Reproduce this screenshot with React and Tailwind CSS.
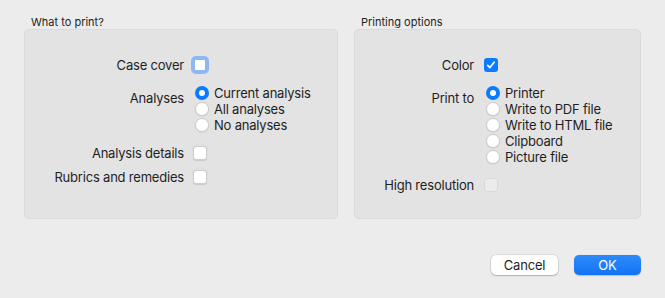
import { useState } from 'react'

const Check = ({ checked, focused, disabled }) => {
  if (checked) {
    return (
      <span className="flex h-[14px] w-[14px] items-center justify-center rounded-[3px] bg-[#0b7bff]">
        <svg viewBox="0 0 14 14" className="h-[12px] w-[12px]">
          <path d="M3.2 7.4l2.5 2.6 5-6.2" fill="none" stroke="#fff" strokeWidth="2" strokeLinecap="round" strokeLinejoin="round" />
        </svg>
      </span>
    )
  }
  if (disabled) {
    return <span className="block h-[14px] w-[14px] rounded-[3px] border border-[#d9d9d9] bg-[#ebebeb]" />
  }
  if (focused) {
    return <span className="block h-[14px] w-[14px] rounded-[3px] border-2 border-[#8fb7f3] bg-white shadow-[0_0_0_2px_#8fb7f3]" />
  }
  return <span className="block h-[14px] w-[14px] rounded-[3px] border border-[#cdcdcd] bg-white shadow-[0_0.5px_1px_rgba(0,0,0,0.12)]" />
}

const Radio = ({ selected, label, onClick }) => (
  <div className="flex h-[16px] cursor-default items-center" onClick={onClick}>
    {selected ? (
      <span className="ml-[2px] flex h-[14px] w-[14px] items-center justify-center rounded-full bg-[#0b7bff]">
        <span className="h-[6px] w-[6px] rounded-full bg-white" />
      </span>
    ) : (
      <span className="ml-[2px] block h-[14px] w-[14px] rounded-full border border-[#cdcdcd] bg-white shadow-[0_0.5px_1px_rgba(0,0,0,0.12)]" />
    )}
    <span className="ml-[5px]">{label}</span>
  </div>
)

const Row = ({ label, labelW, children, className = '' }) => (
  <div className={`flex h-[20px] items-center ${className}`}>
    <div className="text-right" style={{ width: labelW }}>{label}</div>
    <div className="ml-[9px] flex items-center">{children}</div>
  </div>
)

const Group = ({ title, width, children }) => (
  <div style={{ width }}>
    <div className="h-[13px] pl-[7px] text-[11px] leading-[13px] tracking-normal">{title}</div>
    <div className="h-[190px] rounded-[5px] border border-[#dadada] bg-[#e3e3e3] pt-[25px]">{children}</div>
  </div>
)

export default function App() {
  const [analysis, setAnalysis] = useState('current')
  const [target, setTarget] = useState('printer')

  return (
    <div className="h-[298px] w-[665px] bg-[#ececec] px-[24px] pt-[16px] text-[13px] leading-[16px] tracking-[-0.2px] text-[#1f1f1f] [font-family:Inter,'Liberation_Sans',sans-serif]">
      <div className="flex gap-[16px]">
        <Group title="What to print?" width={314}>
          <Row label="Case cover" labelW={159}>
            <Check focused />
          </Row>
          <div className="mt-[10px] flex items-start">
            <div className="w-[159px] pt-[5px] text-right">Analyses</div>
            <div className="ml-[9px]">
              <Radio selected={analysis === 'current'} label="Current analysis" onClick={() => setAnalysis('current')} />
              <Radio selected={analysis === 'all'} label="All analyses" onClick={() => setAnalysis('all')} />
              <Radio selected={analysis === 'none'} label="No analyses" onClick={() => setAnalysis('none')} />
            </div>
          </div>
          <Row label="Analysis details" labelW={159} className="mt-[10px]">
            <Check />
          </Row>
          <Row label="Rubrics and remedies" labelW={159} className="mt-[4px]">
            <Check />
          </Row>
        </Group>

        <Group title="Printing options" width={287}>
          <Row label="Color" labelW={119}>
            <span className="ml-[1px]"><Check checked /></span>
          </Row>
          <div className="mt-[10px] flex items-start">
            <div className="w-[119px] pt-[5px] text-right">Print to</div>
            <div className="ml-[10px]">
              {[
                ['printer', 'Printer'],
                ['pdf', 'Write to PDF file'],
                ['html', 'Write to HTML file'],
                ['clip', 'Clipboard'],
                ['pic', 'Picture file'],
              ].map(([k, l]) => (
                <Radio key={k} selected={target === k} label={l} onClick={() => setTarget(k)} />
              ))}
            </div>
          </div>
          <Row label="High resolution" labelW={119} className="mt-[10px]">
            <span className="ml-[1px]"><Check disabled /></span>
          </Row>
        </Group>
      </div>

      <div className="mt-[36px] flex justify-end gap-[16px]">
        <button className="h-[20px] w-[67px] rounded-[5px] bg-white text-[13px] leading-[20px] text-[#1f1f1f] shadow-[0_0_0_0.5px_rgba(0,0,0,0.15),0_1px_1.5px_rgba(0,0,0,0.2)]">
          Cancel
        </button>
        <button className="h-[20px] w-[67px] rounded-[5px] bg-gradient-to-b from-[#2e89fb] to-[#0f74f5] text-[13px] leading-[20px] text-white shadow-[0_0.5px_1px_rgba(0,0,0,0.2)]">
          OK
        </button>
      </div>
    </div>
  )
}
